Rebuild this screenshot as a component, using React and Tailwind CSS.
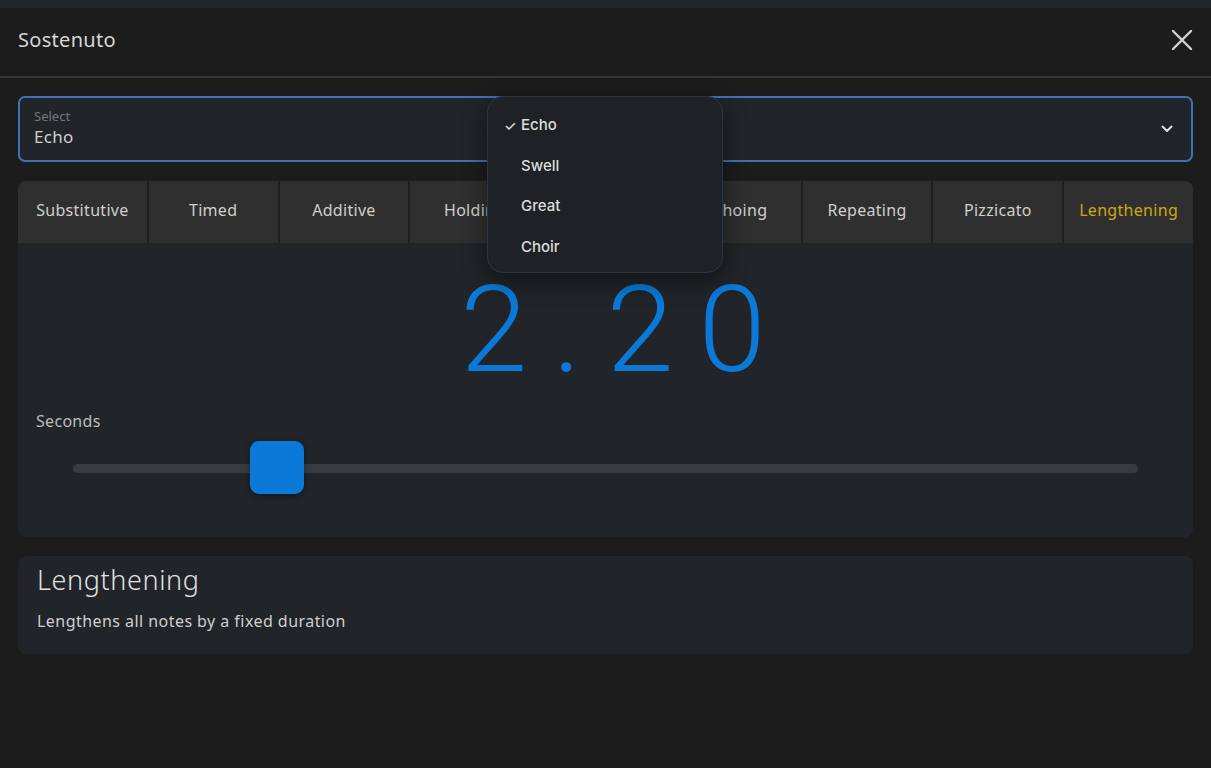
import React from "react";

const tabs = [
  "Substitutive",
  "Timed",
  "Additive",
  "Holding",
  "Doubling",
  "Echoing",
  "Repeating",
  "Pizzicato",
  "Lengthening",
];

const options = ["Echo", "Swell", "Great", "Choir"];

function CloseIcon() {
  return (
    <svg width="22" height="22" viewBox="0 0 22 22" fill="none">
      <path d="M2 2L20 20M20 2L2 20" stroke="#d4d4d4" strokeWidth="2.4" strokeLinecap="round" />
    </svg>
  );
}

function Chevron() {
  return (
    <svg width="12" height="8" viewBox="0 0 12 8" fill="none">
      <path d="M1.5 1.5L6 6L10.5 1.5" stroke="#e0e0e0" strokeWidth="2" strokeLinecap="round" strokeLinejoin="round" />
    </svg>
  );
}

function Dropdown() {
  return (
    <div className="absolute left-[487px] top-[96px] w-[236px] h-[177px] rounded-[16px] border border-[#2a3646] bg-[#1e2125] shadow-[0_8px_24px_rgba(0,0,0,0.45)] pt-[8px] font-['Inter',sans-serif]">
      {options.map((o, i) => (
        <div key={o} className="h-[40.5px] flex items-center text-[15px] font-medium text-[#dedede]">
          <span className="w-[33px] pl-[16px] text-[14px]">{i === 0 ? "✓" : ""}</span>
          <span>{o}</span>
        </div>
      ))}
    </div>
  );
}

export default function App() {
  return (
    <div className="relative w-[1211px] h-[768px] overflow-hidden bg-[#1c1c1c] font-['Noto_Sans',sans-serif]">
      <div className="h-[8px] bg-[#22262d]" />
      <div className="h-[68px] flex items-center justify-between pl-[18px] pr-[18px] pb-[4px]">
        <h1 className="text-[20px] text-[#d6d6d6] tracking-[0.3px]">Sostenuto</h1>
        <CloseIcon />
      </div>
      <div className="h-[2px] bg-[#343434]" />

      <div className="px-[18px] pt-[18px]">
        <div className="h-[66px] rounded-[7px] border-2 border-[#3e71b8] bg-[#212428] flex items-center justify-between pl-[14px] pr-[18px]">
          <div className="flex flex-col pb-[3px]">
            <span className="text-[13px] leading-[18px] text-[#767676]">Select</span>
            <span className="text-[17px] leading-[24px] text-[#cfcfcf] tracking-[0.3px]">Echo</span>
          </div>
          <Chevron />
        </div>

        <div className="mt-[19px] rounded-[8px] overflow-hidden bg-[#212428]">
          <div className="grid grid-cols-9 gap-[2px] bg-[#1f1f1f]">
            {tabs.map((t) => (
              <div
                key={t}
                className={`h-[62px] bg-[#2f2f2f] flex items-center justify-center pb-[5px] text-[16px] tracking-[0.3px] ${
                  t === "Lengthening" ? "text-[#cca716]" : "text-[#cfcfcf]"
                }`}
              >
                {t}
              </div>
            ))}
          </div>
          <div className="h-[294px] flex flex-col">
            <div className="h-[166px] flex items-center justify-center pl-[40px] pt-[8px]">
              <span className="font-['Roboto',sans-serif] font-light text-[121px] leading-none tracking-[25px] text-[#0a79d8]">
                2.20
              </span>
            </div>
            <div className="pl-[18px] text-[16px] text-[#bdbdbd] tracking-[0.3px]">Seconds</div>
            <div className="relative h-[60px] mx-[55px] mt-[5px] flex items-center">
              <div className="h-[9px] w-full rounded-full bg-[#383c42]" />
              <div className="absolute left-[177px] top-[3px] w-[54px] h-[53px] rounded-[9px] bg-[#0a79d8] shadow-[0_2px_6px_rgba(0,0,0,0.4)]" />
            </div>
          </div>
        </div>

        <div className="mt-[19px] h-[98px] rounded-[8px] bg-[#212428] px-[19px] pt-[7px]">
          <div className="text-[27px] leading-[34px] text-[#e0e0e0] font-light tracking-[0.6px]">Lengthening</div>
          <div className="mt-[12px] text-[16px] text-[#cfcfcf] tracking-[0.45px]">Lengthens all notes by a fixed duration</div>
        </div>
      </div>

      <Dropdown />
    </div>
  );
}
